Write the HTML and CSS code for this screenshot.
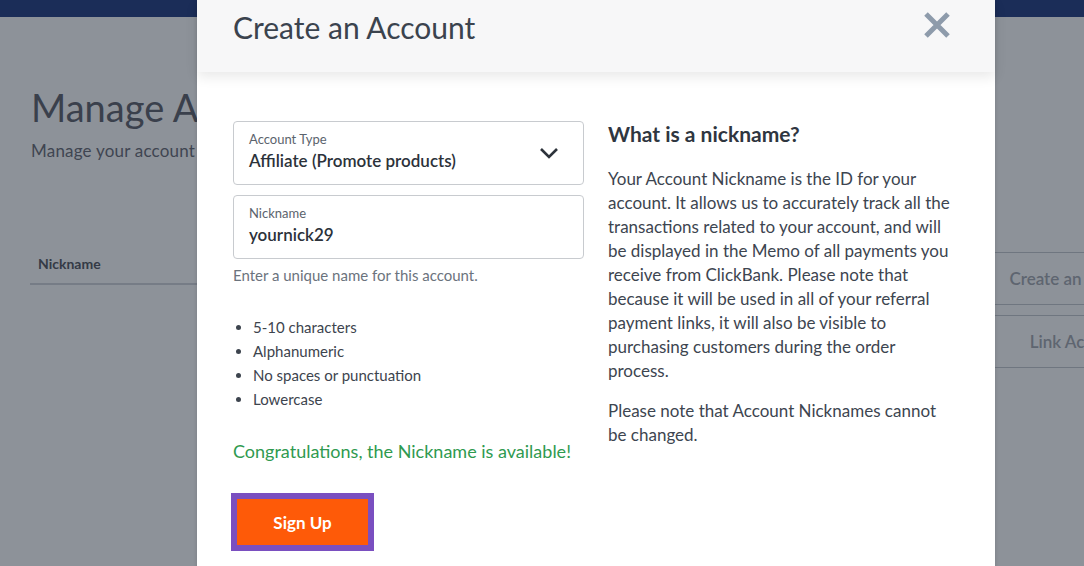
FILE: index.html
```html
<!DOCTYPE html>
<html>
<head>
<meta charset="utf-8">
<link rel="stylesheet" href="styles.css">
</head>
<body>
<div class="page">
  <div class="topbar"></div>
  <div class="bg">
    <div class="bg-main">
      <h1 class="bg-title">Manage Accounts</h1>
      <p class="bg-sub">Manage your account nicknames</p>
      <div class="bg-table-head">Nickname</div>
    </div>
    <div class="bg-aside">
      <div class="bg-btn">Create an Account</div>
      <div class="bg-btn">Link Account</div>
    </div>
  </div>
</div>

<div class="modal">
  <div class="modal-header">
    <h2 class="modal-title">Create an Account</h2>
    <svg class="close" width="28" height="28" viewBox="0 0 28 28"><path d="M3 3 L25 25 M25 3 L3 25" stroke="#8e9bab" stroke-width="5" fill="none"/></svg>
  </div>
  <div class="modal-body">
    <div class="form-col">
      <div class="field">
        <div class="field-text">
          <div class="field-label">Account Type</div>
          <div class="field-value">Affiliate (Promote products)</div>
        </div>
        <svg class="chevron" width="20" height="12" viewBox="0 0 20 12"><path d="M2 2 L10 10 L18 2" stroke="#2d333b" stroke-width="2.6" fill="none"/></svg>
      </div>
      <div class="field field-second">
        <div class="field-text">
          <div class="field-label">Nickname</div>
          <div class="field-value">yournick29</div>
        </div>
      </div>
      <div class="helper">Enter a unique name for this account.</div>
      <ul class="rules">
        <li>5-10 characters</li>
        <li>Alphanumeric</li>
        <li>No spaces or punctuation</li>
        <li>Lowercase</li>
      </ul>
      <div class="success">Congratulations, the Nickname is available!</div>
      <button class="signup">Sign Up</button>
    </div>
    <div class="info-col">
      <h3 class="info-title">What is a nickname?</h3>
      <p class="info-text">Your Account Nickname is the ID for your account. It allows us to accurately track all the transactions related to your account, and will be displayed in the Memo of all payments you receive from ClickBank. Please note that because it will be used in all of your referral payment links, it will also be visible to purchasing customers during the order process.</p>
      <p class="info-text">Please note that Account Nicknames cannot be changed.</p>
    </div>
  </div>
</div>
</body>
</html>
```

FILE: styles.css
```css
html, body {
  margin: 0;
  padding: 0;
  width: 1084px;
  height: 566px;
  overflow: hidden;
  background: #8d9299;
  font-family: "Source Sans Pro", Lato, "Liberation Sans", sans-serif;
}

.page {
  width: 1196px;
}

.topbar {
  height: 17px;
  background: #1b2d58;
}

.bg {
  display: flex;
}

.bg-main {
  flex: 1;
  padding: 70px 0 0 30px;
}

.bg-title {
  margin: 0;
  font-size: 38px;
  font-weight: 400;
  line-height: 40px;
  color: #3a404c;
  padding-left: 1px;
}

.bg-sub {
  margin: 13px 0 0 1px;
  font-size: 17px;
  letter-spacing: 0.2px;
  color: #3f4551;
}

.bg-table-head {
  margin-top: 94px;
  padding: 0 0 11px 8px;
  font-size: 14px;
  font-weight: 700;
  color: #343a46;
  border-bottom: 2px solid #767c86;
  width: 900px;
}

.bg-aside {
  width: 235px;
  padding-top: 235px;
}

.bg-btn {
  height: 51px;
  line-height: 51px;
  text-align: center;
  font-size: 17px;
  font-weight: 600;
  color: #5e6570;
  white-space: nowrap;
  border-top: 1px solid #6f7680;
  border-bottom: 1px solid #6f7680;
  margin-bottom: 10px;
}

.modal {
  position: absolute;
  left: 197px;
  top: 0;
  width: 798px;
  height: 600px;
  background: #ffffff;
  box-shadow: 0 0 4px rgba(0, 0, 0, 0.15);
}

.modal-header {
  height: 72px;
  background: #f7f7f8;
  box-shadow: 0 5px 12px rgba(0, 0, 0, 0.09);
  display: flex;
  justify-content: space-between;
  align-items: flex-start;
  padding: 0 44px 0 36px;
  position: relative;
}

.modal-title {
  margin: 0;
  padding-top: 8px;
  font-size: 30px;
  font-weight: 400;
  line-height: 38px;
  color: #3b434e;
}

.close {
  margin-top: 11px;
}

.modal-body {
  display: flex;
  gap: 24px;
  padding: 49px 36px 0;
}

.form-col {
  width: 351px;
}

.field {
  box-sizing: border-box;
  height: 64px;
  border: 1px solid #c8cbcf;
  border-radius: 4px;
  padding: 10px 15px 0;
  display: flex;
  justify-content: space-between;
}

.field-second {
  margin-top: 10px;
}

.field-label {
  font-size: 13px;
  line-height: 15px;
  color: #5b636d;
}

.field-value {
  margin-top: 2px;
  font-size: 17px;
  font-weight: 600;
  line-height: 24px;
  color: #2c323a;
}

.chevron {
  margin-top: 15px;
  margin-right: 9px;
}

.helper {
  margin-top: 6px;
  font-size: 15px;
  line-height: 20px;
  color: #6b737d;
}

.rules {
  margin: 30px 0 0;
  padding-left: 20px;
  font-size: 15px;
  line-height: 24px;
  color: #3d444e;
}

.success {
  margin-top: 28px;
  font-size: 18px;
  line-height: 24px;
  color: #2f9a50;
}

.signup {
  margin-top: 30px;
  width: 143px;
  height: 58px;
  border: 6px solid #7a4fc0;
  background: #fe5a08;
  color: #ffffff;
  font-family: inherit;
  font-size: 17px;
  font-weight: 700;
  padding: 0;
  margin-left: -2px;
}

.info-col {
  width: 345px;
}

.info-title {
  margin: 0;
  font-size: 21px;
  font-weight: 700;
  line-height: 26px;
  color: #2f3640;
}

.info-text {
  margin: 20px 0 0;
  font-size: 17px;
  line-height: 24px;
  color: #3d4550;
}

.info-text + .info-text {
  margin-top: 16px;
}
```
